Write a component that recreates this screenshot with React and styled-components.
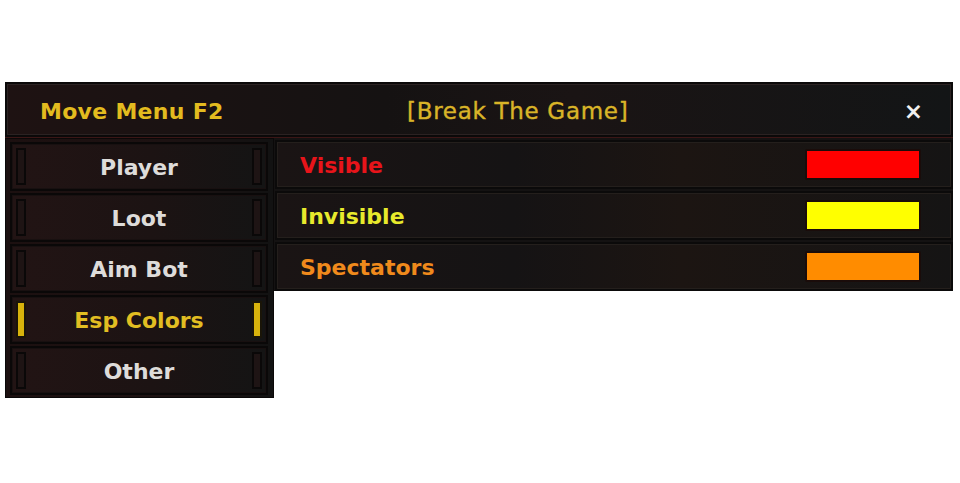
import React from 'react';
import styled, { createGlobalStyle, css } from 'styled-components';

const GlobalStyle = createGlobalStyle`
	html, body {
		margin: 0;
		padding: 0;
		background: #ffffff;
	}
	body {
		font-family: 'DejaVu Sans', Verdana, sans-serif;
	}
`;

const Page = styled.div`
	width: 960px;
	height: 483px;
	padding: 82px 7px 0 5px;
	box-sizing: border-box;
`;

const Window = styled.div`
	display: flex;
	flex-direction: column;
`;

const Header = styled.div`
	height: 55px;
	box-sizing: border-box;
	display: grid;
	grid-template-columns: 367px 1fr auto;
	align-items: center;
	padding: 3px 28px 0 33px;
	background: linear-gradient(90deg, #1e1212 0%, #151212 40%, #1a1414 60%, #131516 100%);
	border: 2px solid #0b0909;
	box-shadow: inset 0 0 0 1px #2b2222, 0 1px 0 #3b1616;
`;

const Title = styled.div`
	color: #e3bb1f;
	font-weight: bold;
	font-size: 22px;
	letter-spacing: 0.3px;
`;

const Caption = styled.div`
	color: #d9b428;
	font-size: 23px;
	letter-spacing: 0.7px;
	-webkit-text-stroke: 0.4px #d9b428;
`;

const Close = styled.div`
	color: #f0f0f0;
	font-weight: bold;
	font-size: 23px;
	line-height: 1;
`;

const Body = styled.div`
	display: flex;
	align-items: flex-start;
	margin-top: 1px;
`;

const Sidebar = styled.div`
	width: 269px;
	box-sizing: border-box;
	padding: 3px 5px 2px 4px;
	display: flex;
	flex-direction: column;
	gap: 2px;
	background: linear-gradient(90deg, #1c1010 0%, #1d1212 60%, #121212 100%);
	border: 1px solid #0a0808;
`;

const Tab = styled.div`
	height: 49px;
	box-sizing: border-box;
	display: flex;
	align-items: center;
	padding: 0 4px;
	gap: 6px;
	border: 2px solid #0a0808;
	background: linear-gradient(90deg, #221414 0%, #1c1313 55%, #141414 100%);
	box-shadow: inset 0 0 0 1px #181010;
`;

const Marker = styled.div`
	width: 10px;
	height: 37px;
	box-sizing: border-box;
	border: 2px solid #0a0808;
	background: #1e1414;
	${(props) =>
		props.active &&
		css`
			background: #d8b30c;
			border-color: #1a1508;
		`}
`;

const TabLabel = styled.div`
	flex: 1;
	text-align: center;
	font-size: 22px;
	font-weight: bold;
	color: #dedcda;
	padding-top: 2px;
	${(props) =>
		props.active &&
		css`
			color: #e2be22;
		`}
`;

const Panel = styled.div`
	flex: 1;
	display: flex;
	flex-direction: column;
	gap: 2px;
	padding: 2px 0 0 1px;
	background: #141212;
`;

const Row = styled.div`
	height: 49px;
	box-sizing: border-box;
	display: flex;
	align-items: center;
	justify-content: space-between;
	padding: 0 30px 0 23px;
	border: 2px solid #0b0a0a;
	background: linear-gradient(90deg, #1a1414 0%, #151314 35%, #1c1512 60%, #151414 100%);
	box-shadow: inset 0 0 0 1px #241f1c;
`;

const RowLabel = styled.div`
	font-size: 22px;
	font-weight: bold;
	padding-top: 2px;
	color: ${(props) => props.color};
`;

const Swatch = styled.div`
	width: 116px;
	height: 31px;
	box-sizing: border-box;
	border: 2px solid #1a0c0a;
	border-radius: 2px;
	background: ${(props) => props.color};
`;

const tabs = ['Player', 'Loot', 'Aim Bot', 'Esp Colors', 'Other'];

const colors = [
	{ label: 'Visible', text: '#e8141a', fill: '#ff0000' },
	{ label: 'Invisible', text: '#e8ea2c', fill: '#ffff00' },
	{ label: 'Spectators', text: '#f08a1c', fill: '#ff8c00' },
];

const App = () => (
	<Page>
		<GlobalStyle />
		<Window>
			<Header>
				<Title>Move Menu F2</Title>
				<Caption>[Break The Game]</Caption>
				<Close>×</Close>
			</Header>
			<Body>
				<Sidebar>
					{tabs.map((tab) => {
						const active = tab === 'Esp Colors';
						return (
							<Tab key={tab}>
								<Marker active={active} />
								<TabLabel active={active}>{tab}</TabLabel>
								<Marker active={active} />
							</Tab>
						);
					})}
				</Sidebar>
				<Panel>
					{colors.map((c) => (
						<Row key={c.label}>
							<RowLabel color={c.text}>{c.label}</RowLabel>
							<Swatch color={c.fill} />
						</Row>
					))}
				</Panel>
			</Body>
		</Window>
	</Page>
);

export default App;
